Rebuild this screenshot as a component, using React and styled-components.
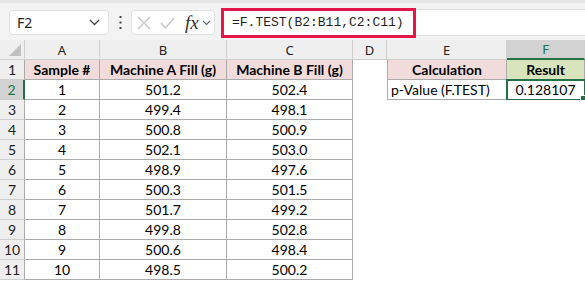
import { Fragment } from 'react';
import styled, { createGlobalStyle } from 'styled-components';

const GlobalStyle = createGlobalStyle`
    body {
        margin: 0;
        background: #ffffff;
        font-family: 'Lato', 'Liberation Sans', sans-serif;
    }
`;

const Sheet = styled.div`
    width: 585px;
    height: 282px;
    overflow: hidden;
    background: #ffffff;
`;

const FormulaBar = styled.div`
    height: 40px;
    box-sizing: border-box;
    background: #f3f3f3;
    border-top: 3px solid #e6e6e6;
    display: flex;
    align-items: center;
    padding: 2px 0 0 9px;
`;

const NameBox = styled.div`
    width: 100px;
    height: 25px;
    box-sizing: border-box;
    background: #fff;
    border: 1px solid #e1e1e1;
    border-radius: 4px;
    display: flex;
    align-items: center;
    justify-content: space-between;
    padding: 0 8px 0 7px;
    font-family: 'Noto Sans', sans-serif;
    font-size: 14px;
    color: #1f1f1f;
`;

const Dots = styled.div`
    width: 22px;
    display: flex;
    justify-content: center;
`;

const ButtonGroup = styled.div`
    width: 84px;
    height: 25px;
    box-sizing: border-box;
    background: #fff;
    border: 1px solid #e1e1e1;
    border-radius: 4px;
    display: flex;
    align-items: center;
    gap: 9px;
    padding-left: 5px;
`;

const FxButton = styled.span`
    display: flex;
    align-items: center;
    gap: 3px;
    margin-left: 1px;
`;

const Fx = styled.span`
    font-family: 'Liberation Serif', serif;
    font-style: italic;
    font-size: 19px;
    line-height: 1;
    color: #333;
`;

const FormulaInput = styled.div`
    flex: 1;
    height: 25px;
    margin-left: 6px;
    background: #fff;
    border: 1px solid #e1e1e1;
    border-right: none;
    border-radius: 4px 0 0 4px;
    display: flex;
    align-items: center;
`;

const Highlight = styled.div`
    margin-left: -1px;
    width: 195px;
    height: 30px;
    box-sizing: border-box;
    border: 3px solid #e2174a;
    display: flex;
    align-items: center;
    padding-left: 8px;
    font-family: 'Liberation Mono', monospace;
    font-size: 13px;
    color: #1f1f1f;
`;

const Grid = styled.div`
    display: grid;
    grid-template-columns: 25px 75px 127px 126px 34px 120px 78px;
    grid-auto-rows: 20px;
`;

const ColHead = styled.div`
    background: ${(p) => (p.$active ? '#d2d2d2' : '#efefef')};
    color: ${(p) => (p.$active ? '#217346' : '#222')};
    border-right: 1px solid #cfcfcf;
    border-bottom: ${(p) => (p.$active ? '2px solid #217346' : '1px solid #cfcfcf')};
    box-sizing: border-box;
    display: flex;
    align-items: center;
    justify-content: center;
    font-family: 'Noto Sans', sans-serif;
    font-size: 13px;
    position: relative;
`;

const Corner = styled(ColHead)`
    &::after {
        content: '';
        position: absolute;
        right: 3px;
        bottom: 3px;
        border-left: 12px solid transparent;
        border-bottom: 12px solid #c0c0c0;
    }
`;

const RowHead = styled.div`
    background: ${(p) => (p.$active ? '#d2d2d2' : '#efefef')};
    color: ${(p) => (p.$active ? '#217346' : '#222')};
    border-right: ${(p) => (p.$active ? '2px solid #217346' : '1px solid #ababab')};
    border-bottom: 1px solid #cfcfcf;
    box-sizing: border-box;
    display: flex;
    align-items: center;
    justify-content: center;
    font-family: 'Lato', sans-serif;
    font-size: 14px;
`;

const Cell = styled.div`
    box-sizing: border-box;
    display: flex;
    align-items: center;
    justify-content: ${(p) => (p.$left ? 'flex-start' : 'center')};
    padding-left: ${(p) => (p.$left ? '3px' : '0')};
    background: ${(p) => p.$bg || '#fff'};
    border-left: ${(p) => (p.$first ? '1px solid #ababab' : 'none')};
    border-right: ${(p) => (p.$lined ? '1px solid #ababab' : 'none')};
    border-bottom: ${(p) => (p.$lined ? '1px solid #ababab' : 'none')};
    font-family: 'Lato', sans-serif;
    font-size: 14px;
    font-weight: ${(p) => (p.$bold ? 700 : 400)};
    color: #000;
    position: relative;
    white-space: nowrap;
`;

const Selected = styled(Cell)`
    outline: 2px solid #217346;
    outline-offset: -1px;
    &::after {
        content: '';
        position: absolute;
        right: -3px;
        bottom: -3px;
        width: 5px;
        height: 5px;
        background: #217346;
        border: 1px solid #fff;
    }
`;

const data = [
    [1, '501.2', '502.4'],
    [2, '499.4', '498.1'],
    [3, '500.8', '500.9'],
    [4, '502.1', '503.0'],
    [5, '498.9', '497.6'],
    [6, '500.3', '501.5'],
    [7, '501.7', '499.2'],
    [8, '499.8', '502.8'],
    [9, '500.6', '498.4'],
    [10, '498.5', '500.2'],
];

const pink = '#f2dcdb';
const green = '#d8e4bc';

const Chevron = () => (
    <svg width='11' height='7' viewBox='0 0 11 7'>
        <path d='M1 1 L5.5 5.5 L10 1' fill='none' stroke='#444' strokeWidth='1.3' />
    </svg>
);

export default function App() {
    return (
        <Sheet>
            <GlobalStyle />
            <FormulaBar>
                <NameBox>
                    F2
                    <Chevron />
                </NameBox>
                <Dots>
                    <svg width='3' height='13' viewBox='0 0 3 13'>
                        <rect x='0.5' y='0' width='2' height='2' fill='#444' />
                        <rect x='0.5' y='5.5' width='2' height='2' fill='#444' />
                        <rect x='0.5' y='11' width='2' height='2' fill='#444' />
                    </svg>
                </Dots>
                <ButtonGroup>
                    <svg width='14' height='14' viewBox='0 0 14 14'>
                        <path d='M1 1 L13 13 M13 1 L1 13' stroke='#c4c4c4' strokeWidth='1.3' />
                    </svg>
                    <svg width='15' height='12' viewBox='0 0 15 12'>
                        <path d='M1 6 L5.5 11 L14 1' fill='none' stroke='#c4c4c4' strokeWidth='1.3' />
                    </svg>
                    <FxButton>
                        <Fx>fx</Fx>
                        <svg width='9' height='6' viewBox='0 0 9 6'>
                            <path d='M1 1 L4.5 4.5 L8 1' fill='none' stroke='#666' strokeWidth='1.1' />
                        </svg>
                    </FxButton>
                </ButtonGroup>
                <FormulaInput>
                    <Highlight>=F.TEST(B2:B11,C2:C11)</Highlight>
                </FormulaInput>
            </FormulaBar>
            <Grid>
                <Corner />
                {['A', 'B', 'C', 'D', 'E', 'F'].map((c) => (
                    <ColHead key={c} $active={c === 'F'}>
                        {c}
                    </ColHead>
                ))}

                <RowHead>1</RowHead>
                <Cell $lined $bold $bg={pink}>Sample #</Cell>
                <Cell $lined $bold $bg={pink}>Machine A Fill (g)</Cell>
                <Cell $lined $bold $bg={pink}>Machine B Fill (g)</Cell>
                <Cell />
                <Cell $lined $first $bold $bg={pink}>Calculation</Cell>
                <Cell $lined $bold $bg={green}>Result</Cell>

                {data.map((row, i) => (
                    <Fragment key={row[0]}>
                        <RowHead $active={i === 0}>{i + 2}</RowHead>
                        <Cell $lined>{row[0]}</Cell>
                        <Cell $lined>{row[1]}</Cell>
                        <Cell $lined>{row[2]}</Cell>
                        <Cell />
                        {i === 0 ? (
                            <>
                                <Cell $lined $first $left>p-Value (F.TEST)</Cell>
                                <Selected $lined>0.128107</Selected>
                            </>
                        ) : (
                            <>
                                <Cell />
                                <Cell />
                            </>
                        )}
                    </Fragment>
                ))}
            </Grid>
        </Sheet>
    );
}
